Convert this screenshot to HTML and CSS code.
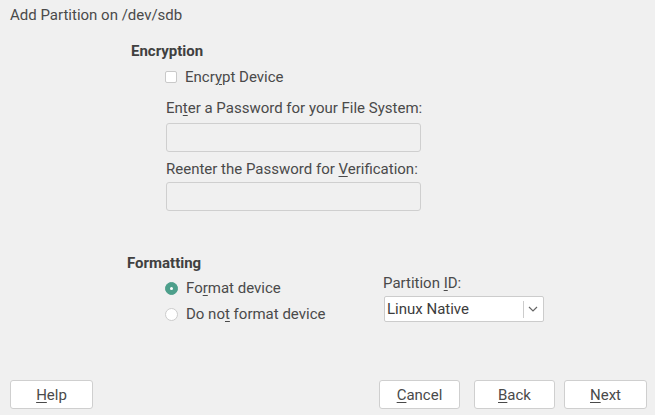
FILE: index.html
```html
<!DOCTYPE html>
<html>
<head>
<meta charset="utf-8">
<link rel="stylesheet" href="styles.css">
</head>
<body>
<div class="page">
  <div class="title">Add Partition on /dev/sdb</div>

  <section class="encryption">
    <div class="heading">Encryption</div>
    <div class="check-row">
      <span class="checkbox"></span>
      <span class="check-label">Encr<u>y</u>pt Device</span>
    </div>
    <div class="field-label first">En<u>t</u>er a Password for your File System:</div>
    <div class="input"></div>
    <div class="field-label">Reenter the Password for <u>V</u>erification:</div>
    <div class="input second"></div>
  </section>

  <section class="formatting">
    <div class="heading">Formatting</div>
    <div class="format-body">
      <div class="radios">
        <div class="radio-row">
          <span class="radio checked"></span>
          <span class="radio-label">Fo<u>r</u>mat device</span>
        </div>
        <div class="radio-row">
          <span class="radio"></span>
          <span class="radio-label">Do no<u>t</u> format device</span>
        </div>
      </div>
      <div class="partition">
        <div class="pid-label">Partition <u>I</u>D:</div>
        <div class="combo">
          <span class="combo-text">Linux Native</span>
          <span class="combo-sep"></span>
          <svg class="chev" width="10" height="6" viewBox="0 0 10 6"><polyline points="1,1 5,5 9,1" fill="none" stroke="#666" stroke-width="1.2"/></svg>
        </div>
      </div>
    </div>
  </section>

  <footer class="buttons">
    <button class="btn help"><u>H</u>elp</button>
    <div class="spacer"></div>
    <button class="btn cancel"><u>C</u>ancel</button>
    <button class="btn back"><u>B</u>ack</button>
    <button class="btn next"><u>N</u>ext</button>
  </footer>
</div>
</body>
</html>
```
FILE: styles.css
```css
html, body {
  margin: 0;
  padding: 0;
}
body {
  background: #f0f0f0;
  font-family: Roboto, "Liberation Sans", sans-serif;
  font-size: 15px;
  color: #4a4a4a;
}
.page {
  width: 655px;
  height: 415px;
  display: flex;
  flex-direction: column;
  box-sizing: border-box;
  padding-bottom: 6px;
}
u {
  text-decoration-thickness: 1px;
  text-underline-offset: 2px;
}
.title {
  line-height: 18px;
  margin-top: 6px;
  padding-left: 10px;
}
.heading {
  font-weight: bold;
  line-height: 18px;
  color: #404040;
  font-size: 15px;
}
.encryption {
  margin-left: 131px;
  margin-top: 18px;
  display: flex;
  flex-direction: column;
}
.check-row {
  display: flex;
  align-items: center;
  height: 18px;
  margin-top: 8px;
  padding-left: 34px;
}
.checkbox {
  width: 10px;
  height: 10px;
  border: 1px solid #c9c9c9;
  border-radius: 2px;
  background: #fff;
  margin-right: 8px;
}
.field-label {
  line-height: 18px;
  margin-left: 35px;
  margin-top: 8px;
}
.field-label.first {
  margin-top: 13px;
}
.input {
  width: 253px;
  height: 27px;
  border: 1px solid #cfcfcf;
  border-radius: 3px;
  background: #f0f0f0;
  margin-left: 35px;
  margin-top: 6px;
}
.input.second {
  margin-top: 4px;
}
.formatting {
  margin-left: 127px;
  margin-top: 43px;
}
.format-body {
  display: flex;
  align-items: flex-start;
  margin-top: 1px;
}
.radios {
  width: 256px;
  padding-left: 38px;
  padding-top: 6px;
  box-sizing: border-box;
  display: flex;
  flex-direction: column;
  gap: 8px;
}
.radio-row {
  display: flex;
  align-items: center;
  height: 18px;
}
.radio {
  width: 11px;
  height: 11px;
  border: 1px solid #cccccc;
  border-radius: 50%;
  background: #fff;
  margin-right: 8px;
  position: relative;
}
.radio.checked {
  background: #4d9f8b;
  border-color: #4d9f8b;
}
.radio.checked::after {
  content: "";
  position: absolute;
  left: 4px;
  top: 4px;
  width: 3px;
  height: 3px;
  border-radius: 50%;
  background: #fff;
}
.partition {
  padding-top: 1px;
  display: flex;
  flex-direction: column;
}
.pid-label {
  line-height: 18px;
}
.combo {
  margin-top: 4px;
  margin-left: 1px;
  width: 158px;
  height: 24px;
  border: 1px solid #cccccc;
  border-radius: 2px;
  background: #fff;
  display: flex;
  align-items: center;
  box-sizing: content-box;
}
.combo-text {
  flex: 1;
  padding-left: 2px;
  color: #3c3c3c;
}
.combo-sep {
  width: 1px;
  height: 17px;
  background: #cccccc;
}
.chev {
  margin: 0 5px 0 4px;
}
.buttons {
  margin-top: auto;
  display: flex;
  padding: 0 8px 0 10px;
}
.spacer {
  flex: 1;
}
.btn {
  height: 29px;
  background: #fff;
  border: 1px solid #cfcfcf;
  border-radius: 3px;
  font-family: Roboto, "Liberation Sans", sans-serif;
  font-size: 15px;
  color: #4a4a4a;
  padding: 0;
}
.help { width: 83px; }
.cancel { width: 81px; }
.back { width: 81px; margin-left: 14px; }
.next { width: 83px; margin-left: 9px; }
```
